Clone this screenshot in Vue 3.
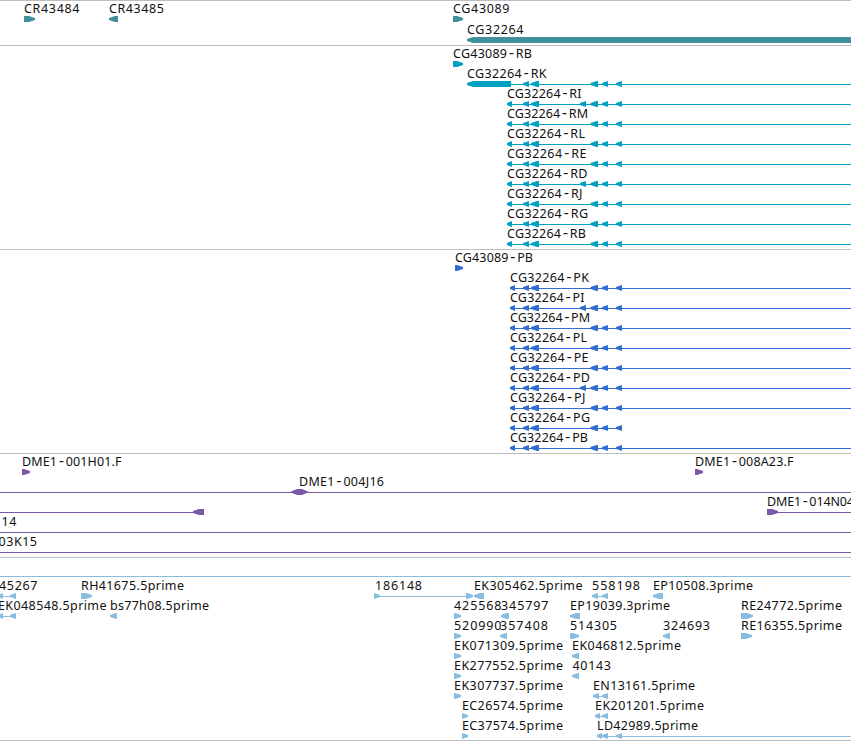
<script setup>
// Feature rows: y is the centre line of a glyph, labels sit six pixels above it.
// Shapes: [direction, start, end]; direction is 'l', 'r' or 'both'.
const row = (y, name, x, end, shapes = [], line = null) => ({ y, name, x, end, shapes, line })

const common = [['l', 523, 529], ['l', 531, 539], ['l', 590.5, 598], ['l', 602, 608], ['l', 616, 622]]
const extra = ['l', 580, 586]

const transcripts = [
  ['RK', 547], ['RI', 582], ['RM', 588.5], ['RL', 585.5], ['RE', 587],
  ['RD', 588], ['RJ', 583], ['RG', 588.5], ['RB', 586.5],
].map(([id, end], i) => row(
  84 - 46 + i * 20, 'CG32264-' + id, i ? 507 : 467, end,
  [['l', i ? 507 : 467, i ? 512 : 511], ...common, ...(id === 'RI' || id === 'RD' ? [extra] : [])],
  [i ? 510 : 500, 851],
))

const proteins = [
  ['PK', 589.5], ['PI', 585], ['PM', 590.5], ['PL', 587.5], ['PE', 589],
  ['PD', 590.5], ['PJ', 586], ['PG', 590.5], ['PB', 588.5],
].map(([id, end], i) => row(
  288 - 250 + i * 20, 'CG32264-' + id, 510, end,
  [['l', 510, 515], ...common, ...(id === 'PI' || id === 'PD' ? [extra] : [])],
  [512, id === 'PG' ? 622 : 851],
))

const tracks = [
  {
    id: 'gene', height: 44, rows: [
      row(18, 'CR43484', 24, 80, [['r', 24, 35]]),
      row(18, 'CR43485', 109, 164.5, [['l', 109, 118]]),
      row(18, 'CG43089', 453, 510, [['r', 453, 463]]),
      row(39, 'CG32264', 467, 524, [['l', 467, 860]]),
    ],
  },
  {
    id: 'transcript', height: 203, rows: [
      row(18, 'CG43089-RB', 453, 532.5, [['r', 453, 463]]),
      ...transcripts,
    ],
  },
  {
    id: 'protein', height: 203, rows: [
      row(18, 'CG43089-PB', 455, 533.5, [['r', 455, 463]]),
      ...proteins,
    ],
  },
  {
    id: 'clone', height: 103, rows: [
      row(18, 'DME1-001H01.F', 22, 122, [['r', 22, 30]]),
      row(18, 'DME1-008A23.F', 695, 794, [['r', 695, 703]]),
      row(38, 'DME1-004J16', 299, 384.5, [['both', 291, 308]], [0, 851]),
      row(58, '', 0, 0, [['l', 193, 204]], [0, 204]),
      row(58, 'DME1-014N04', 767, 854.5, [['r', 767, 778]], [770, 851]),
      row(78, '14', 1.5, 17, [], [0, 851]),
      row(98, '03K15', -1.5, 37.5, [], [0, 851]),
    ],
  },
  {
    id: 'est', height: 182, rows: [
      row(18, '', 0, 0, [], [0, 851]),
      row(38, '45267', -1, 38, [['l', -2, 3], ['l', 10, 16]], [0, 14]),
      row(38, 'RH41675.5prime', 81, 184.5, [['r', 81, 92]]),
      row(38, '186148', 375, 422.5, [['r', 374, 380], ['r', 466, 473]], [376, 471]),
      row(38, 'EK305462.5prime', 474, 583, [['l', 474, 484]]),
      row(38, '558198', 592, 640.5, [['l', 592, 598], ['l', 602, 608]], [594, 606]),
      row(38, 'EP10508.3prime', 653, 753.5, [['l', 653, 663]]),
      row(58, 'EK048548.5prime', -2, 107, [['l', -2, 3], ['l', 10, 16]], [0, 14]),
      row(58, 'bs77h08.5prime', 110, 209.5, [['l', 110, 117]]),
      row(58, '425568', 454, 502, [['r', 454, 461]]),
      row(58, '345797', 501, 549, [['l', 501, 509]]),
      row(58, 'EP19039.3prime', 570, 670.5, [['l', 570, 580]]),
      row(58, 'RE24772.5prime', 741, 842.5, [['r', 741, 753]]),
      row(78, '520990', 454, 502, [['r', 454, 461]]),
      row(78, '357408', 500, 548.5, [['l', 500, 507]]),
      row(78, '514305', 570, 617.5, [['r', 570, 579]]),
      row(78, '324693', 663, 710.5, [['l', 663, 670]]),
      row(78, 'RE16355.5prime', 741, 842.5, [['r', 741, 752]]),
      row(98, 'EK071309.5prime', 454, 563.5, [['r', 454, 461]]),
      row(98, 'EK046812.5prime', 572, 681.5, [['l', 572, 579]]),
      row(118, 'EK277552.5prime', 454, 563.5, [['r', 454, 461]]),
      row(118, '40143', 572.5, 611.5, [['l', 572, 579]]),
      row(138, 'EK307737.5prime', 454, 563.5, [['r', 454, 461]]),
      row(138, 'EN13161.5prime', 593, 695.5, [['l', 593, 599], ['l', 602, 608]], [594, 606]),
      row(158, 'EC26574.5prime', 462, 563.5, [['r', 462, 468]]),
      row(158, 'EK201201.5prime', 595, 704.5, [['l', 595, 600], ['l', 602, 608]], [596, 606]),
      row(178, 'EC37574.5prime', 462, 563.5, [['r', 462, 468]]),
      row(178, 'LD42989.5prime', 597, 698.5, [['l', 597, 602], ['l', 602, 608], ['l', 616, 622]], [598, 851]),
    ],
  },
]

function points([dir, a, b], y) {
  const top = y - 3
  const bottom = y + 3
  const tip = Math.min(6, b - a)
  if (dir === 'l') {
    return `${a},${y - 1} ${a},${y + 1} ${a + tip},${bottom} ${b},${bottom} ${b},${top} ${a + tip},${top}`
  }
  if (dir === 'r') {
    return `${a},${top} ${b - tip},${top} ${b},${y - 1} ${b},${y + 1} ${b - tip},${bottom} ${a},${bottom}`
  }
  return `${a},${y + 0.5} ${a},${y - 0.5} ${a + tip},${top} ${b - tip},${top} ${b},${y - 0.5} ${b},${y + 0.5} ${b - tip},${bottom} ${a + tip},${bottom}`
}
</script>

<template>
  <main class="browser">
    <section v-for="t in tracks" :key="t.id" class="track" :class="t.id">
      <svg class="canvas" width="851" :height="t.height" :viewBox="`0 0 851 ${t.height}`">
        <g v-for="(r, i) in t.rows" :key="i">
          <rect v-if="r.line" :x="r.line[0]" :y="r.y" :width="r.line[1] - r.line[0]" height="1" />
          <polygon v-for="(s, j) in r.shapes" :key="j" :points="points(s, r.y)" />
          <text v-if="r.name" class="label" :x="r.x" :y="r.y - 6" :textLength="r.end - r.x - 0.5"><template v-for="(part, k) in r.name.split('-')" :key="k"><tspan v-if="k" class="dash">-</tspan>{{ part }}</template></text>
        </g>
      </svg>
    </section>
  </main>
</template>

<style>
body {
  background: #fff;
}
</style>

<style scoped>
.browser {
  width: 851px;
  height: 741px;
  box-sizing: border-box;
  overflow: hidden;
  display: flex;
  flex-direction: column;
  background: #fff;
  border-bottom: 1px solid #bebebe;
}
.track {
  flex: none;
  border-top: 1px solid #bebebe;
}
.canvas {
  display: block;
}
.label {
  fill: #111;
  font: 12.5px "Noto Sans", sans-serif;
}
.dash {
  font-family: "Liberation Mono", monospace;
  font-size: 14px;
}
.gene { fill: #3f9098; }
.transcript { fill: #00a0c0; }
.protein { fill: #306dce; }
.clone { fill: #785aa8; }
.est { fill: #88bddf; }
</style>
